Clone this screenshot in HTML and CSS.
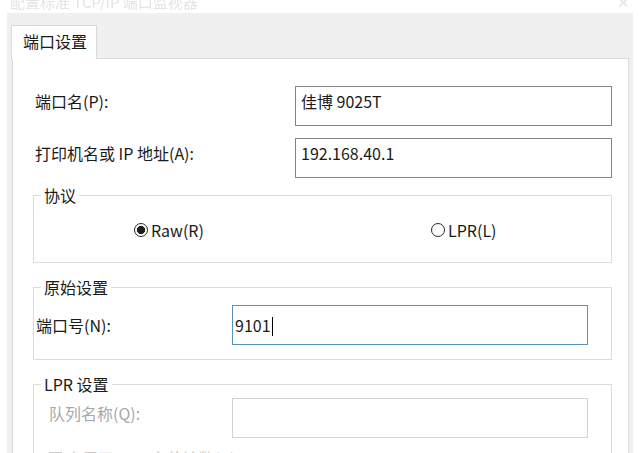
FILE: index.html
```html
<!DOCTYPE html>
<html>

<head>
    <meta charset="UTF-8">
    <title>端口设置</title>
    <link rel="stylesheet" href="styles.css">
</head>

<body>
    <div class="titlebar">
        <span class="title">配置标准 TCP/IP 端口监视器</span>
        <span class="close">✕</span>
    </div>
    <div class="dialog">
        <div class="tabs">
            <div class="tab">端口设置</div>
        </div>
        <div class="panel">
            <div class="row">
                <div class="label">端口名(P):</div>
                <div class="textbox">佳博 9025T</div>
            </div>
            <div class="row">
                <div class="label">打印机名或 IP 地址(A):</div>
                <div class="textbox">192.168.40.1</div>
            </div>

            <!--协议-->
            <fieldset class="group protocol">
                <legend>协议</legend>
                <div class="radios">
                    <label class="radio"><input type="radio" name="proto" checked>Raw(R)</label>
                    <label class="radio"><input type="radio" name="proto">LPR(L)</label>
                </div>
            </fieldset>

            <!--原始设置-->
            <fieldset class="group raw">
                <legend>原始设置</legend>
                <div class="row inset">
                    <div class="label short">端口号(N):</div>
                    <div class="textbox focused">9101<span class="caret"></span></div>
                </div>
            </fieldset>

            <!--LPR 设置-->
            <fieldset class="group lpr">
                <legend>LPR 设置</legend>
                <div class="row inset disabled">
                    <div class="label narrow">队列名称(Q):</div>
                    <div class="textbox"></div>
                </div>
                <div class="check disabled">
                    <span class="box"></span>启用了 LPR 字节计数(B)
                </div>
            </fieldset>
        </div>
    </div>
</body>

</html>
```

FILE: styles.css
```css
body {
    margin: 0;
    height: 453px;
    overflow: hidden;
    background-color: #FFF;
    font-family: "Noto Sans CJK SC", sans-serif;
    font-size: 16px;
    color: #1A1A1A;
}

.titlebar {
    height: 13px;
    overflow: hidden;
    display: flex;
    align-items: flex-end;
    justify-content: space-between;
    padding: 0 10px;
    color: #E4E4E4;
    font-size: 15px;
    line-height: 22px;
    filter: blur(0.7px);
}

.dialog {
    margin: 0 7px;
    background-color: #F0F0F0;
    height: 460px;
}

.tabs {
    display: flex;
    padding: 12px 0 0 4px;
}

.tab {
    position: relative;
    z-index: 1;
    width: 86px;
    height: 34px;
    box-sizing: border-box;
    margin-bottom: -1px;
    padding: 5px 0 0 11px;
    line-height: 20px;
    background-color: #FFF;
    border: 1px solid #D9D9D9;
    border-bottom: none;
}

.panel {
    margin: 0 4px 0 5px;
    padding: 27px 16px 0 20px;
    background-color: #FFF;
    border: 1px solid #D9D9D9;
    height: 400px;
}

.row {
    display: flex;
    align-items: flex-start;
    padding-left: 2px;
    line-height: 20px;
}

.row + .row {
    margin-top: 12px;
}

.label {
    width: 260px;
    flex: none;
    padding-top: 5px;
}

.textbox {
    flex: 1;
    height: 40px;
    box-sizing: border-box;
    padding: 4px 5px;
    border: 1px solid #868686;
    line-height: 20px;
}

.group {
    margin: 14px 0 0 0;
    padding: 0;
    min-width: 0;
    border: 1px solid #DCDCDC;
}

.group legend {
    margin-left: 7px;
    padding: 0 3px;
    line-height: 20px;
}

.protocol {
    margin-top: 7px;
    padding: 15px 0 22px 0;
}

.radios {
    display: grid;
    grid-template-columns: 297px auto;
    padding-left: 100px;
}

.radio {
    display: flex;
    align-items: center;
    gap: 3px;
    line-height: 20px;
}

.radio input {
    appearance: none;
    margin: 0;
    width: 14px;
    height: 14px;
    border: 1px solid #2B2B2B;
    border-radius: 50%;
    background-color: #FFF;
}

.radio input:checked {
    background: radial-gradient(circle, #1E1E1E 0 3.8px, #FFF 4.4px);
}

.raw {
    padding: 8px 0 14px 0;
}

.row.inset {
    padding-right: 23px;
}

.label.short {
    width: 196px;
    padding-top: 10px;
}

.textbox.focused {
    padding: 9px 2px;
    border-color: #5A93B8;
}

.caret {
    display: inline-block;
    width: 1px;
    height: 19px;
    margin-left: 1px;
    vertical-align: -4px;
    background-color: #000;
}

.lpr {
    padding: 4px 0 0 0;
}

.row.inset.disabled {
    padding-left: 15px;
}

.label.narrow {
    width: 183px;
}

.disabled {
    color: #A8A8A8;
}

.disabled .textbox {
    border-color: #D2D2D2;
}

.check {
    display: flex;
    align-items: center;
    gap: 4px;
    margin-top: 10px;
    padding-left: 15px;
    line-height: 20px;
    color: #CACACA;
}

.check .box {
    width: 13px;
    height: 13px;
    box-sizing: border-box;
    border: 1px solid #D0D0D0;
}
```
